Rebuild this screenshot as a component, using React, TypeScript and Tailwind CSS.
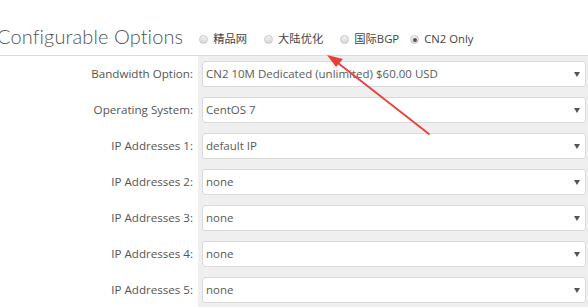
const rows = [
  { label: "Bandwidth Option:", value: "CN2 10M Dedicated (unlimited) $60.00 USD" },
  { label: "Operating System:", value: "CentOS 7" },
  { label: "IP Addresses 1:", value: "default IP" },
  { label: "IP Addresses 2:", value: "none" },
  { label: "IP Addresses 3:", value: "none" },
  { label: "IP Addresses 4:", value: "none" },
  { label: "IP Addresses 5:", value: "none" },
];

const radios = [
  { label: "精品网", checked: false },
  { label: "大陆优化", checked: false },
  { label: "国际BGP", checked: false },
  { label: "CN2 Only", checked: true },
];

function Radio({ checked }: { checked: boolean }) {
  return (
    <span className="w-[9px] h-[9px] rounded-full border border-[#c8c8c8] bg-gradient-to-b from-[#f4f4f4] to-[#d6d6d6] flex items-center justify-center shrink-0">
      {checked && <span className="w-[4px] h-[4px] rounded-full bg-[#555]" />}
    </span>
  );
}

export default function App() {
  return (
    <div className="relative w-[588px] h-[307px] overflow-hidden bg-white" style={{ fontFamily: '"Open Sans", "Noto Sans CJK SC", sans-serif' }}>
      {/* Header */}
      <div className="h-[56px] flex items-end border-b border-[#dcdcdc] pb-[5px]">
        <h1 className="ml-[-3px] text-[20px] font-light leading-none text-[#555] tracking-[0.1px] pb-[4px]" style={{ fontFamily: 'Lato, sans-serif' }}>
          Configurable Options
        </h1>
        <div className="flex items-center ml-[16px] mb-[2px] text-[11.3px] text-[#444]">
          {radios.map((r, i) => (
            <label key={r.label} className={`flex items-center gap-[5px] ${i === 0 ? "" : i === 3 ? "ml-[11px]" : "ml-[17px]"}`}>
              <Radio checked={r.checked} />
              <span>{r.label}</span>
            </label>
          ))}
        </div>
      </div>

      {/* Options */}
      <div className="flex flex-col">
        {rows.map((r) => (
          <div key={r.label} className="flex">
            <div className="w-[198px] pr-[5px] flex items-center justify-end text-[11.6px] text-[#555]">{r.label}</div>
            <div className="flex-1 bg-[#efefef] pl-[4px] pr-[2px] py-[5px]">
              <div className="h-[26px] bg-white border border-[#dadada] rounded-[3px] flex items-center justify-between pl-[3px] pr-[5px] text-[11.5px] text-[#5a5a5a]">
                <span>{r.value}</span>
                <span className="w-0 h-0 border-l-[3px] border-r-[3px] border-t-[5px] border-l-transparent border-r-transparent border-t-[#555]" />
              </div>
            </div>
          </div>
        ))}
      </div>

      {/* Annotation arrow */}
      <svg className="absolute left-0 top-0 pointer-events-none" width="588" height="307">
        <line x1="429" y1="134" x2="338" y2="63" stroke="#e8403b" strokeWidth="1.8" strokeLinecap="round" />
        <path d="M327 55 L343 59 L336 67 Z" fill="#e8403b" />
      </svg>
    </div>
  );
}
